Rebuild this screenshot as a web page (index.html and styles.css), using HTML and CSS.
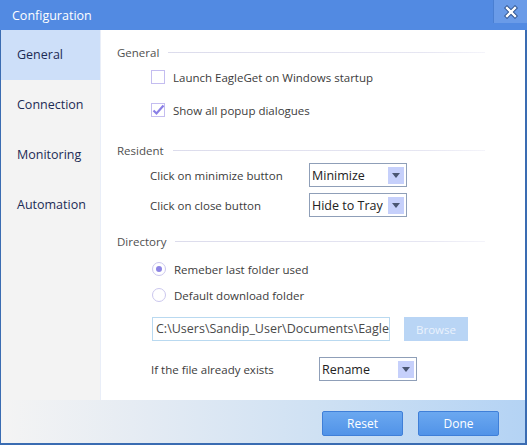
FILE: index.html
```html
<!DOCTYPE html>
<html>
<head>
<meta charset="utf-8">
<title>Configuration</title>
<link rel="stylesheet" href="styles.css">
</head>
<body>
<div class="window">
  <div class="titlebar">
    <span class="title">Configuration</span>
    <button class="close" aria-label="Close">
      <svg width="14" height="14" viewBox="0 0 14 14">
        <path d="M3 3 L11 11 M11 3 L3 11" stroke="#2c4f8a" stroke-width="4.2" stroke-linecap="square"/>
        <path d="M3 3 L11 11 M11 3 L3 11" stroke="#ffffff" stroke-width="2.4" stroke-linecap="square"/>
      </svg>
    </button>
  </div>
  <div class="main">
    <nav class="sidebar">
      <div class="nav-item active">General</div>
      <div class="nav-item">Connection</div>
      <div class="nav-item">Monitoring</div>
      <div class="nav-item">Automation</div>
    </nav>
    <div class="content">
      <div class="section-head"><span>General</span><i class="rule"></i></div>
      <div class="opt first">
        <span class="check"></span><span class="label">Launch EagleGet on Windows startup</span>
      </div>
      <div class="opt second">
        <span class="check">
          <svg width="14" height="14" viewBox="0 0 14 14"><path d="M2.5 7.5 L5.5 10.5 L12.5 2.5" fill="none" stroke="#8a7fe6" stroke-width="2.2"/></svg>
        </span><span class="label">Show all popup dialogues</span>
      </div>

      <div class="section-head resident"><span>Resident</span><i class="rule"></i></div>
      <div class="field first-field">
        <span class="field-label">Click on minimize button</span>
        <div class="select"><span class="sel-text">Minimize</span><span class="arrow"><svg width="8" height="5" viewBox="0 0 8 5"><path d="M0 0 H8 L4 5 Z" fill="#4a5672"/></svg></span></div>
      </div>
      <div class="field second-field">
        <span class="field-label">Click on close button</span>
        <div class="select"><span class="sel-text">Hide to Tray</span><span class="arrow"><svg width="8" height="5" viewBox="0 0 8 5"><path d="M0 0 H8 L4 5 Z" fill="#4a5672"/></svg></span></div>
      </div>

      <div class="section-head directory"><span>Directory</span><i class="rule"></i></div>
      <div class="opt radio-first">
        <span class="radio on"></span><span class="label">Remeber last folder used</span>
      </div>
      <div class="opt radio-second">
        <span class="radio"></span><span class="label">Default download folder</span>
      </div>
      <div class="path-row">
        <div class="path-input">C:\Users\Sandip_User\Documents\Eagle</div>
        <button class="browse">Browse</button>
      </div>
      <div class="field exists">
        <span class="field-label wide">If the file already exists</span>
        <div class="select"><span class="sel-text">Rename</span><span class="arrow"><svg width="8" height="5" viewBox="0 0 8 5"><path d="M0 0 H8 L4 5 Z" fill="#4a5672"/></svg></span></div>
      </div>
    </div>
  </div>
  <div class="footer">
    <button class="btn">Reset</button>
    <button class="btn">Done</button>
  </div>
</div>
</body>
</html>
```
FILE: styles.css
```css
* { box-sizing: border-box; }
html, body { margin: 0; padding: 0; }
body {
  width: 527px;
  height: 445px;
  overflow: hidden;
  font-family: "Open Sans", "Noto Sans", sans-serif;
  font-size: 11.5px;
  color: #3c3c3c;
}
.window {
  width: 527px;
  height: 445px;
  display: flex;
  flex-direction: column;
  border-left: 1px solid #3a6cb2;
  border-right: 2px solid #3a6cb2;
  border-bottom: 2px solid #3a6cb2;
  background: #fff;
}
.titlebar {
  height: 30px;
  background: #528ae2;
  display: flex;
  align-items: flex-start;
  justify-content: space-between;
  margin-left: -1px;
  margin-right: -2px;
}
.title {
  color: #fff;
  font-size: 12.5px;
  line-height: 31px;
  padding-left: 12px;
}
.close {
  width: 34px;
  height: 23px;
  border: 0;
  border-left: 1px solid #4a7fd2;
  background: #6a9be8;
  padding: 0;
  display: flex;
  align-items: center;
  justify-content: center;
}
.main {
  flex: 1;
  display: flex;
  min-height: 0;
}
.sidebar {
  width: 100px;
  background: #f3f3f3;
  border-right: 1px solid #e9eef8;
}
.nav-item {
  height: 50px;
  line-height: 49px;
  padding-left: 16px;
  font-size: 12.5px;
  color: #1c2b55;
}
.nav-item.active {
  background: #cddff9;
}
.content {
  flex: 1;
  padding: 14px 40px 0 16px;
}
.section-head {
  height: 16px;
  display: flex;
  align-items: center;
  gap: 9px;
  color: #505050;
}
.rule {
  flex: 1;
  height: 1px;
  background: linear-gradient(to right, #dcdcec, #e6e6f2 80%, #f4f4fa);
}
.opt {
  height: 20px;
  display: flex;
  align-items: center;
  padding-left: 34px;
}
.opt.first { margin-top: 7px; }
.opt.second { margin-top: 13px; }
.check {
  width: 14px;
  height: 14px;
  border: 1px solid #c4bdf0;
  background: #fff;
  margin-right: 8px;
  position: relative;
}
.check svg { position: absolute; left: -1px; top: -1px; }
.radio {
  width: 14px;
  height: 14px;
  border: 1px solid #cbc7ee;
  border-radius: 50%;
  background: #fff;
  margin-left: 1px;
  margin-right: 8px;
  display: flex;
  align-items: center;
  justify-content: center;
}
.radio.on::after {
  content: "";
  width: 6px;
  height: 6px;
  border-radius: 50%;
  background: #8d84e4;
}
.section-head.resident { margin-top: 22px; }
.section-head.directory { margin-top: 16px; }
.field {
  height: 24px;
  display: flex;
  align-items: center;
  padding-left: 33px;
}
.field.first-field { margin-top: 5px; }
.field.second-field { margin-top: 6px; }
.field-label { width: 159px; }
.field-label.wide { width: 168px; }
.field.exists { margin-top: 16px; padding-left: 34px; }
.select {
  width: 98px;
  height: 24px;
  border: 1px solid #8f9fb8;
  background: #fff;
  display: flex;
  align-items: center;
  justify-content: space-between;
  padding: 2px 2px 2px 2px;
}
.sel-text {
  font-size: 12.5px;
  color: #222;
  white-space: nowrap;
  overflow: hidden;
}
.arrow {
  width: 16px;
  height: 17px;
  flex: none;
  background: #c6d0fb;
  display: flex;
  align-items: center;
  justify-content: center;
}
.opt.radio-first { margin-top: 10px; }
.opt.radio-second { margin-top: 6px; }
.path-row {
  margin-top: 12px;
  padding-left: 35px;
  display: flex;
  gap: 14px;
}
.path-input {
  width: 238px;
  height: 24px;
  border: 1px solid #b9d9f0;
  font-size: 12.5px;
  line-height: 22px;
  padding-left: 3px;
  color: #4a4a4a;
  white-space: nowrap;
  overflow: hidden;
}
.browse {
  width: 64px;
  height: 24px;
  border: 0;
  background: #b9d5f5;
  color: #eaf2fd;
  font-family: inherit;
  font-size: 11.5px;
  padding: 0;
}
.footer {
  height: 43px;
  background: linear-gradient(to right, #f4f4f4 0%, #e6ecf3 25%, #cfe1f3 60%, #b4d3f4 100%);
  display: flex;
  align-items: flex-start;
  justify-content: flex-end;
  gap: 15px;
  padding: 11px 26px 0 0;
}
.btn {
  width: 81px;
  height: 25px;
  border: 1px solid #3f7fd8;
  border-radius: 2px;
  background: linear-gradient(#6ba8f0, #5193e8);
  color: #fff;
  font-family: inherit;
  font-size: 12px;
  padding: 0;
}
```
